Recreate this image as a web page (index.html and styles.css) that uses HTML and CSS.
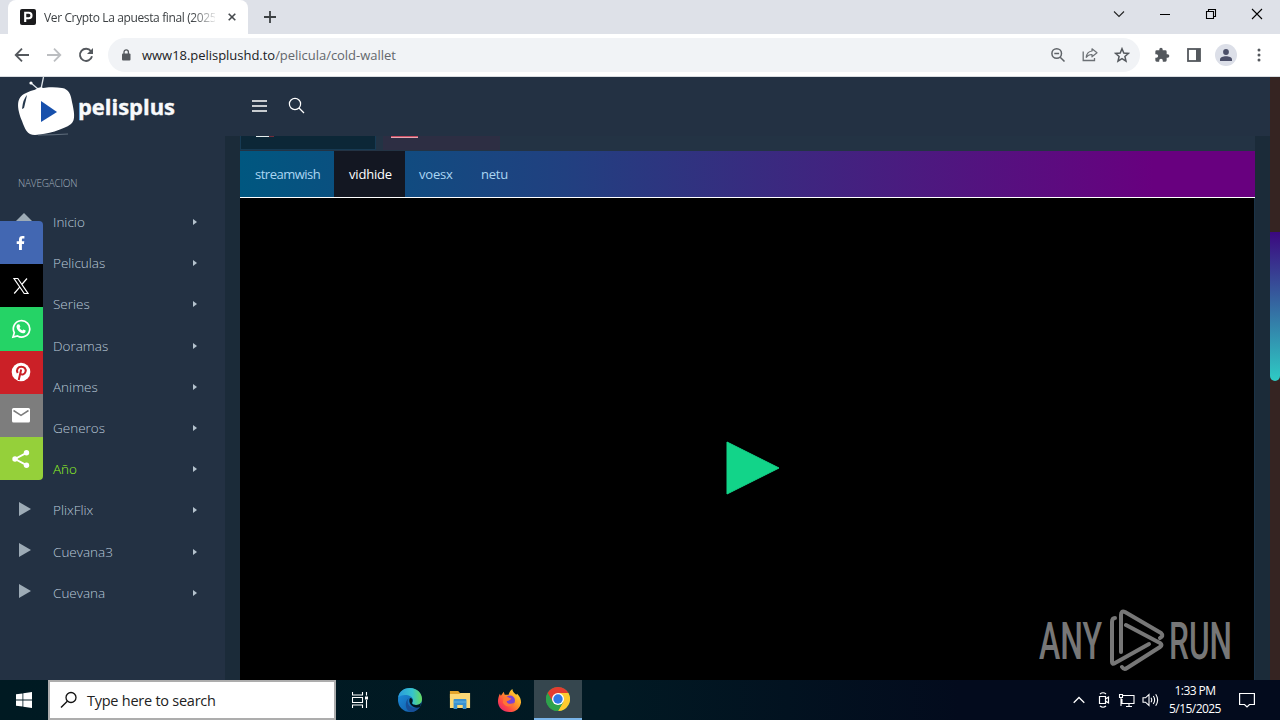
FILE: index.html
```html
<!DOCTYPE html>
<html lang="es">
<head>
  <meta charset="UTF-8">
  <meta name="viewport" content="width=device-width, initial-scale=1.0">
  <title>Ver Crypto La apuesta final (2025)</title>
  <link rel="stylesheet" href="styles.css">
</head>
<body>
  <div class="tabstrip">
    <div class="tab">
      <svg width="16" height="16" viewBox="0 0 16 16"><rect width="16" height="16" rx="2" fill="#1b1b1d"/><path d="M5.2 13V3.8h3.6a2.6 2.6 0 0 1 0 5.4H5.5" fill="none" stroke="#fff" stroke-width="2.1"/></svg>
      <span class="tab-title">Ver Crypto La apuesta final (2025</span>
      <svg class="tab-close" width="8" height="8" viewBox="0 0 8 8"><path d="M.7.7l6.6 6.6M7.3.7L.7 7.3" stroke="#45494d" stroke-width="1.6"/></svg>
    </div>
    <svg class="new-tab" width="12" height="12" viewBox="0 0 12 12"><path d="M6 0v12M0 6h12" stroke="#3c4043" stroke-width="1.8"/></svg>
    <div class="window-buttons">
      <svg width="12" height="12" viewBox="0 0 12 12"><path d="M1 3.5l5 5 5-5" fill="none" stroke="#222" stroke-width="1.1"/></svg>
      <svg width="12" height="12" viewBox="0 0 12 12"><path d="M1 6.5h10" stroke="#000"/></svg>
      <svg width="12" height="12" viewBox="0 0 12 12"><path d="M1.5 3.5h7v7h-7zM3.5 3.5v-2h7v7h-2" fill="none" stroke="#000" stroke-width="1.1"/></svg>
      <svg width="12" height="12" viewBox="0 0 12 12"><path d="M1 1l10 10M11 1L1 11" stroke="#000" stroke-width="1.1"/></svg>
    </div>
  </div>

  <div class="toolbar">
    <div class="nav-buttons">
      <svg width="16" height="16" viewBox="0 0 16 16"><path d="M15 8H2M8 1.7L1.7 8 8 14.3" fill="none" stroke="#54585d" stroke-width="1.8"/></svg>
      <svg width="16" height="16" viewBox="0 0 16 16"><path d="M1 8h13M8 1.7L14.3 8 8 14.3" fill="none" stroke="#bcbec1" stroke-width="1.8"/></svg>
      <svg width="16" height="16" viewBox="0 0 16 16"><path d="M13 4.2A6.1 6.1 0 1 0 14 9.3" fill="none" stroke="#54585d" stroke-width="1.9"/><path d="M15 1v6H9z" fill="#54585d"/></svg>
    </div>
    <div class="address">
      <svg width="10" height="12" viewBox="0 0 10 12"><rect x="1" y="4.5" width="8.5" height="7" rx="1" fill="#55595e"/><path d="M3 5V3a2.2 2.2 0 0 1 4.400 0v2" fill="none" stroke="#55595e" stroke-width="1.3"/></svg>
      <span class="url"><b>www18.pelisplushd.to</b>/pelicula/cold-wallet</span>
      <svg width="16" height="16" viewBox="0 0 16 16"><circle cx="6.7" cy="6.5" r="4.8" fill="none" stroke="#5f6368" stroke-width="1.5"/><path d="M10.2 10.2l4.3 4.3M4.3 6.5h4.8" stroke="#5f6368" stroke-width="1.5"/></svg>
      <svg width="16" height="16" viewBox="0 0 16 16"><path d="M1.2 4.5v9h11.3V11" fill="none" stroke="#6c7075" stroke-width="1.3"/><path d="M10 1.8l5 4-5 4V7.5C7.3 7.4 5.5 8.5 4.2 10.3 4.6 7 6.5 4.5 10 4z" fill="none" stroke="#6c7075" stroke-width="1.2" stroke-linejoin="round"/></svg>
      <svg width="16" height="16" viewBox="0 0 16 16"><path d="M8 1.7l1.8 4.3 4.7.4-3.6 3.1 1.1 4.6L8 11.700l-4 2.4 1.1-4.6L1.5 6.400 6.2 6z" fill="none" stroke="#54585d" stroke-width="1.5"/></svg>
    </div>
    <div class="tools">
      <svg width="16" height="16" viewBox="0 0 24 24"><path d="M20.5 11H19V7a2 2 0 0 0-2-2h-4V3.5a2.5 2.5 0 0 0-5 0V5H4a2 2 0 0 0-2 2v3.8h1.5a2.7 2.7 0 0 1 0 5.4H2V20a2 2 0 0 0 2 2h3.8v-1.5a2.7 2.7 0 0 1 5.4 0V22H17a2 2 0 0 0 2-2v-4h1.5a2.5 2.5 0 0 0 0-5z" fill="#54585d"/></svg>
      <svg width="14" height="14" viewBox="0 0 14 14"><rect x="1" y="1" width="12" height="12" fill="none" stroke="#54585d" stroke-width="1.8"/><rect x="9" y="1" width="4" height="12" fill="#54585d"/></svg>
      <span class="avatar"><svg width="14" height="14" viewBox="0 0 14 14"><circle cx="7" cy="4" r="2.9" fill="#4b4f68"/><path d="M1 13v-1.5C1 9.3 4 8.3 7 8.3s6 1 6 3.2V13z" fill="#4b4f68"/></svg></span>
      <svg width="4" height="14" viewBox="0 0 4 14"><g fill="#54585d"><circle cx="2" cy="2" r="1.5"/><circle cx="2" cy="7" r="1.5"/><circle cx="2" cy="12" r="1.5"/></g></svg>
    </div>
  </div>

  <div class="viewport">
    <div class="site">
      <header class="header">
        <svg class="logo" width="164" height="59" viewBox="0 0 164 59">
          <path d="M23 12L25.500 0M20 12L13 6" stroke="#dfe5ea" stroke-width="1.3"/><circle cx="13" cy="6" r="1.6" fill="#fff"/><path d="M17 13q5-5 10-1z" fill="#fff"/>
          <path d="M6 17C17 11 32 9 44 11C51 12 53 18 54 25C56 34 58 43 53 47C45 53 29 57 17 58C9 58 7 52 4 44C0 34-3 22 6 17z" fill="#fff"/>
          <path d="M4 32q1-10 5-14q-1 5-3 13z" fill="#25374c"/>
          <path d="M23 24v21l16-10z" fill="#1750ac"/>
          <path d="M20 58q15 0 30-1" stroke="#8a97a4" stroke-width=".6" fill="none"/>
          <text class="logo-text" x="60" y="38" textLength="97" lengthAdjust="spacingAndGlyphs">pelisplus</text>
        </svg>
        <svg class="menu-toggle" width="15" height="12" viewBox="0 0 15 12"><path d="M0 1h15M0 6h15M0 11h15" stroke="#fff" stroke-width="1.5"/></svg>
        <svg class="search-toggle" width="17" height="17" viewBox="0 0 17 17"><circle cx="7" cy="7" r="5.6" fill="none" stroke="#fff" stroke-width="1.2"/><path d="M11 11l5 5" stroke="#fff" stroke-width="1.3"/></svg>
      </header>
      <div class="content">
        <nav class="sidebar">
          <p class="nav-heading">NAVEGACION</p>
          <ul>
            <li class="home">Inicio</li>
            <li>Peliculas</li>
            <li>Series</li>
            <li>Doramas</li>
            <li>Animes</li>
            <li>Generos</li>
            <li class="active">Año</li>
            <li class="play">PlixFlix</li>
            <li class="play">Cuevana3</li>
            <li class="play">Cuevana</li>
          </ul>
        </nav>
        <main class="main">
          <div class="languages">
            <div class="language latino"><i></i></div>
            <div class="language subtitled"><i></i></div>
          </div>
          <div class="servers">
            <a class="first">streamwish</a>
            <a class="selected">vidhide</a>
            <a class="voesx">voesx</a>
            <a>netu</a>
          </div>
          <div class="player">
            <svg class="player-button" width="54" height="54" viewBox="0 0 54 54"><path d="M1 1v52l52-26z" fill="#12d489" stroke="#12d489" stroke-linejoin="round"/></svg>
            <svg class="watermark" width="196" height="64" viewBox="0 0 196 64">
              <g class="watermark-text">
                <text x="0" y="51" textLength="63" lengthAdjust="spacingAndGlyphs">ANY</text>
                <text x="130" y="51" textLength="63" lengthAdjust="spacingAndGlyphs">RUN</text>
              </g>
              <g fill="none" stroke="#777" stroke-width="4" stroke-linecap="round" stroke-linejoin="round">
                <path d="M76 10q-3 0-3 4v40q0 3 3 1l34-19"/>
                <path d="M82 44V7q0-5 4-3l36 21q3 3-1 5"/>
                <path d="M87 17l34 18q3 2 0 4L88 60q-3 2-5-1"/>
              </g>
            </svg>
          </div>
        </main>
      </div>
      <div class="share">
        <a class="facebook"><svg viewBox="0 0 20 20"><path d="M8 17v-6H5.7V8.300H8V6.500C8 4 9.3 2.900 11.4 2.900h2v2.500h-1.300c-1 0-1.2.5-1.2 1.3v1.600h2.400l-.4 2.700h-2v6z" fill="#fff"/></svg></a>
        <a class="x"><svg viewBox="0 0 20 20"><path d="M3 2.500h3.800L17 17.500h-3.800zM16 2.500L10.800 8.500M8.500 11.400l-5.300 6.100" fill="none" stroke="#fff" stroke-width="1.2"/></svg></a>
        <a class="whatsapp"><svg viewBox="0 0 20 20"><path d="M2 18l1.3-4.3A8.2 8.2 0 1 1 6.500 17z" fill="none" stroke="#fff" stroke-width="1.7"/><path d="M7 5.300l1.500.2.9 2.300-.9 1.200q1 1.900 2.900 2.600l1-1.200 2.300 1.100c0 2-1.300 2.800-2.700 2.800-3.300-.4-6.300-3.600-6.500-6.500 0-1.100.7-2.200 1.500-2.500z" fill="#fff"/></svg></a>
        <a class="pinterest"><svg viewBox="0 0 20 20"><circle cx="10" cy="10" r="9.3" fill="#fff"/><path d="M6.700 10.900C4.900 7.600 7 4.800 10.300 4.800s5 2.200 4.200 5c-.8 2.700-3.700 3.600-4.800 1.900M10.200 7.600L7.700 18" fill="none" stroke="#cb2027" stroke-width="2"/></svg></a>
        <a class="email"><svg viewBox="0 0 20 20"><rect x="1" y="3" width="18" height="14.5" rx="1.5" fill="#fff"/><path d="M2.500 5.500l7.500 4.800 7.500-4.800" fill="none" stroke="#7d7d7d" stroke-width="1.5"/></svg></a>
        <a class="sharethis"><svg viewBox="0 0 20 20"><path d="M15.500 3.800L4 10l11.500 6.200" fill="none" stroke="#fff" stroke-width="1.9"/><g fill="#fff"><circle cx="15.5" cy="3.8" r="2.7"/><circle cx="4" cy="10" r="2.7"/><circle cx="15.5" cy="16.2" r="2.7"/></g></svg></a>
      </div>
    </div>
    <div class="scrollbar"><div class="thumb"></div></div>
  </div>

  <div class="taskbar">
    <div class="start"><svg width="16" height="16" viewBox="0 0 16 16"><path d="M0 2.300l6.500-.9v6.200H0zM7.300 1.300L16 0v7.600H7.300zM0 8.400h6.500v6.200L0 13.700zM7.300 8.400H16V16l-8.700-1.300z" fill="#fff"/></svg></div>
    <div class="search-box">
      <svg width="18" height="18" viewBox="0 0 18 18"><circle cx="11" cy="6.5" r="5" fill="none" stroke="#111" stroke-width="1.3"/><path d="M7.300 10.200L1 16.500" stroke="#111" stroke-width="1.4"/></svg>
      <span>Type here to search</span>
    </div>
    <div class="apps">
      <div class="app"><svg width="16" height="16" viewBox="0 0 16 16"><path d="M.5 0v3h10V0M.5 16v-3h10v3M.5 5.500h10v5H.5zM14.500 0v3.500M14.500 8v8" fill="none" stroke="#fff" stroke-width="1.1"/><rect x="13" y="4.5" width="3" height="3" fill="#fff"/></svg></div>
      <div class="app"><svg width="26" height="26" viewBox="0 0 26 26">
        <defs>
          <linearGradient id="edgeTop" x1="0" x2="1"><stop offset="0" stop-color="#2999dc"/><stop offset=".6" stop-color="#36c3cd"/><stop offset="1" stop-color="#67db5c"/></linearGradient>
          <linearGradient id="edgeLow" x1="0" y1="0" x2="1" y2="1"><stop offset="0" stop-color="#1c91df"/><stop offset="1" stop-color="#10539e"/></linearGradient>
        </defs>
        <circle cx="13" cy="13" r="12" fill="url(#edgeLow)"/>
        <path d="M1 11C2 4 7 1 13 1c7 0 12 5 12 11 0 4-3 6-6 6-2 0-4-1-4-2 1-1 1-2 1-3 0-3-4-5-8-5-3 0-6 1-7 3z" fill="url(#edgeTop)"/>
        <path d="M12 11c-3 3-1 10 6 10 2 0 4-.5 5-1-2 3-6 5-9 5-6-1-7-11-2-14z" fill="#174f98"/>
        <path d="M13 11c3 0 3 3 2 5 0 1 2 2 4 2 2 0 4-1 5-2l-1 4c-6 3-13-4-10-9z" fill="#021820"/>
      </svg></div>
      <div class="app"><svg width="22" height="22" viewBox="0 0 24 22" preserveAspectRatio="none"><path d="M1 2h9l2 2h10v5H1z" fill="#e3a52c"/><path d="M1 5h10l2-1h10v15H1z" fill="#fcd976"/><path d="M5 20v-9q0-1 1-1h12q1 0 1 1v9h-4v-4H9v4z" fill="#3a92d0"/><path d="M5 13h14" stroke="#65b5e3"/></svg></div>
      <div class="app"><svg width="25" height="25" viewBox="0 0 26 26">
        <defs><linearGradient id="fox" x1="1" y1="0" x2="0" y2="1"><stop offset="0" stop-color="#fff13a"/><stop offset=".4" stop-color="#ff9d27"/><stop offset=".7" stop-color="#ff4844"/><stop offset="1" stop-color="#d71785"/></linearGradient></defs>
        <path d="M3 6l1 2 3-4 1 3 4 0c1-3 2-5 4-6 0 3 2 4 4 6l1-1c3 3 4 6 4 9-1 6-5 10-12 10S1 20 1 14c0-3 1-6 2-8z" fill="url(#fox)"/>
        <circle cx="13.5" cy="13" r="5.2" fill="#7b42d4"/><path d="M7 10c3-2 5 0 8 1-1 2-4 2-5 3 1 3 5 3 8 1-2 5-9 6-12 0z" fill="#ff7535"/>
      </svg></div>
      <div class="app current"><svg width="24" height="24" viewBox="0 0 24 24">
        <circle cx="12" cy="12" r="12" fill="#2ea24b"/><path d="M1.600 6A12 12 0 0 1 22.400 6H12L6.800 15z" fill="#e33c30"/><path d="M22.400 6A12 12 0 0 1 12 24l5.200-9L18 6z" fill="#fdcb2f"/><path d="M12 6h10.400l-5.200 9z" fill="#fdcb2f"/><path d="M1.600 6A12 12 0 0 0 12 24l5.200-9H6.800z" fill="#2ea24b"/>
        <circle cx="12" cy="12" r="6" fill="#fff"/><circle cx="12" cy="12" r="4.7" fill="#2f78e5"/>
      </svg></div>
    </div>
    <div class="tray">
      <svg width="12" height="8" viewBox="0 0 12 8"><path d="M.7 6.800L6 1.500l5.300 5.300" fill="none" stroke="#fff" stroke-width="1.3"/></svg>
      <svg class="tray-camera" width="12" height="18" viewBox="0 0 12 18"><path d="M1.500 5.500h6v7h-6zM7.500 8l3-2v6l-3-2M2 3q3-2.500 6 0M2 15q3 2.500 6 0" fill="none" stroke="#fff" stroke-width="1.2"/></svg>
      <svg class="tray-network" width="17" height="14" viewBox="0 0 17 14"><path d="M5 2.500h11v8H4V6M8 13.500h6M11 10.500v3M1.500 1.500h3v3h-3zM3 4.500V13" fill="none" stroke="#fff" stroke-width="1.1"/></svg>
      <svg class="tray-sound" width="17" height="14" viewBox="0 0 17 14"><path d="M1 4.800h2.500L7 1.500v11L3.500 9.200H1zM9 4.700q1.500 2.300 0 4.600M11.300 3q2.700 4 0 8M13.700 1.300q3.900 5.700 0 11.400" fill="none" stroke="#fff" stroke-width="1.1"/></svg>
      <div class="clock"><div>1:33 PM</div><div>5/15/2025</div></div>
      <svg class="notifications" width="16" height="17" viewBox="0 0 16 17"><path d="M.6 1.500h14.800v11H10.500L8 15l-2.500-2.500H.6z" fill="none" stroke="#fff" stroke-width="1.2"/></svg>
    </div>
  </div>
</body>
</html>
```
FILE: styles.css
```css
* {
  box-sizing: border-box;
}
body {
  margin: 0;
  height: 720px;
  display: flex;
  flex-direction: column;
  overflow: hidden;
  font-family: "Open Sans", "Noto Sans", sans-serif;
}
svg {
  display: block;
  flex-shrink: 0;
}

/* Browser */
.tabstrip {
  height: 34px;
  background-color: #dee1e8;
  display: flex;
  align-items: center;
  padding-left: 8px;
}
.tab {
  width: 240px;
  height: 34px;
  padding: 0 12px;
  display: flex;
  align-items: center;
  background-color: white;
  border-radius: 8px 8px 0 0;
}
.tab-title {
  width: 171px;
  margin: 0 13px 0 8px;
  overflow: hidden;
  white-space: nowrap;
  font-size: 12px;
  letter-spacing: -0.37px;
  color: #3c4043;
  -webkit-mask-image: linear-gradient(to right, #000 148px, transparent 174px);
  mask-image: linear-gradient(to right, #000 148px, transparent 174px);
}
.new-tab {
  margin-left: 16px;
}
.window-buttons {
  display: flex;
  gap: 34px;
  margin: -6px 17px 0 auto;
}
.toolbar {
  height: 43px;
  display: flex;
  align-items: center;
  background-color: white;
  border-bottom: 1px solid #d9dde1;
}
.nav-buttons {
  width: 108px;
  padding-left: 14px;
  display: flex;
  gap: 16px;
}
.address {
  width: 1032px;
  height: 34px;
  padding: 0 10px 0 13px;
  display: flex;
  align-items: center;
  gap: 16px;
  border-radius: 17px;
  background-color: #f1f3f6;
}
.url {
  flex: 1;
  margin-left: -5px;
  font-size: 13px;
  letter-spacing: -0.03px;
  color: #63676c;
  white-space: nowrap;
}
.url b {
  font-weight: normal;
  color: #202124;
}
.tools {
  display: flex;
  align-items: center;
  margin-left: 14px;
}
.tools > svg:nth-child(2) {
  margin: 0 14px 0 17px;
}
.avatar {
  width: 22px;
  height: 22px;
  margin-right: 20px;
  display: flex;
  align-items: center;
  justify-content: center;
  border-radius: 50%;
  background-color: #dcdfe8;
}

/* Page */
.viewport {
  height: 603px;
  display: flex;
}
.site {
  width: 1270px;
  position: relative;
  background-color: #1b2b39;
}
.header {
  height: 59px;
  padding-left: 18px;
  display: flex;
  align-items: center;
  background-color: #233143;
}
.logo {
  overflow: visible;
}
.logo-text {
  font-family: "Open Sans", sans-serif;
  font-size: 22px;
  font-weight: bold;
  fill: #f8f9fb;
  stroke: #f8f9fb;
  stroke-width: 0.4px;
}
.menu-toggle {
  margin: -2px 22px 0 70px;
}
.search-toggle {
  margin: -2px 0 0 -1px;
}
.content {
  height: 544px;
  display: flex;
}
.sidebar {
  width: 225px;
  background-color: #233143;
}
.nav-heading {
  height: 65.5px;
  margin: 0;
  padding: 40px 18px 0;
  font-size: 10px;
  font-weight: 300;
  line-height: 14px;
  letter-spacing: -0.2px;
  color: #a3b1bf;
}
.sidebar ul {
  margin: 0;
  padding: 0;
  list-style: none;
}
.sidebar li {
  position: relative;
  height: 41.2px;
  padding: 0 28px 0 53px;
  display: flex;
  align-items: center;
  justify-content: space-between;
  font-size: 13.5px;
  font-weight: 300;
  color: #b9c8d8;
}
.sidebar li::after {
  content: "";
  border: 3px solid transparent;
  border-left: 4px solid #b4c2cd;
  border-right: 0;
}
.sidebar .active {
  color: #92f525;
}
.sidebar .play::before,
.sidebar .home::before {
  content: "";
  position: absolute;
  left: 19px;
  top: 12px;
  border: 7px solid transparent;
  border-left: 12px solid #9dabb6;
  border-right: 0;
}
.sidebar .home::before {
  left: 16px;
  top: 11px;
  border: 8px solid transparent;
  border-top: 0;
  border-bottom-color: #9dabb6;
}
.main {
  width: 1015px;
  margin-left: 15px;
}
.languages {
  height: 15px;
  display: flex;
  background-color: #233344;
}
.language {
  height: 14px;
}
.language i {
  display: block;
  height: 2px;
}
.latino {
  width: 136px;
  margin-right: 7px;
  padding-left: 15px;
  background-color: #0c2737;
  border: 1px solid #173a53;
  border-top: 0;
}
.latino i {
  width: 18px;
  height: 1px;
  background: linear-gradient(to right, #e4eeee 75%, #712c3a 75%);
}
.subtitled {
  width: 117px;
  padding-left: 8px;
  background-color: #2d2e43;
}
.subtitled i {
  width: 27px;
  background-color: #c84c61;
  border-bottom: 1px solid #e4a6b2;
}
.servers {
  height: 47px;
  display: flex;
  border-bottom: 1px solid white;
  background: linear-gradient(to right, #005780, #214080 32%, #68007f 90%);
}
.servers a {
  padding: 13px 0 0 15px;
  font-size: 13px;
  line-height: 20px;
  letter-spacing: -0.2px;
  color: #abd6f3;
}
.servers .first {
  width: 94px;
  letter-spacing: -0.5px;
}
.servers .selected {
  width: 71px;
  background-color: #131722;
  color: white;
}
.servers .voesx {
  width: 61px;
  padding-left: 14px;
}
.player {
  position: relative;
  height: 482px;
  background-color: black;
  border-right: 1px solid #1b3347;
}
.player-button {
  position: absolute;
  left: 486px;
  top: 243px;
}
.watermark {
  position: absolute;
  left: 799px;
  top: 410px;
}
.watermark-text {
  font-family: Roboto, sans-serif;
  font-size: 52px;
  font-weight: 500;
  fill: #777;
}
.share {
  position: absolute;
  left: 0;
  top: 144px;
  width: 43px;
  border-radius: 0 4px 4px 0;
  overflow: hidden;
}
.share a {
  height: 43.2px;
  padding-right: 1px;
  display: flex;
  align-items: center;
  justify-content: center;
}
.share svg {
  width: 20px;
  height: 20px;
}
.facebook {
  background-color: #4267b2;
}
.x {
  background-color: black;
}
.whatsapp {
  background-color: #25d366;
}
.pinterest {
  background-color: #cb2027;
}
.email {
  background-color: #7d7d7d;
}
.sharethis {
  background-color: #95d03a;
}
.scrollbar {
  width: 10px;
  padding-top: 155px;
  background-color: #352422;
}
.thumb {
  height: 149px;
  border-radius: 0 0 5px 5px;
  background: linear-gradient(#3b087f, #2ecbc4);
}

/* Taskbar */
.taskbar {
  height: 40px;
  display: flex;
  background: linear-gradient(to right, #001a22, #011923 48%, #030b1d 75%);
}
.start {
  width: 48px;
  padding: 12px 16px;
}
.search-box {
  width: 288px;
  padding: 0 10px;
  display: flex;
  align-items: center;
  gap: 9px;
  background-color: white;
  border: 2px solid #adadad;
  font-size: 14.5px;
  letter-spacing: -0.25px;
  color: #222;
}
.apps {
  display: flex;
}
.app {
  width: 49px;
  display: flex;
  align-items: center;
  justify-content: center;
}
.app:first-child {
  width: 48px;
}
.app:nth-child(2) {
  width: 51px;
}
.app:nth-child(4) {
  width: 50px;
}
.current {
  width: 48px;
  background-color: #35464e;
  border-bottom: 2px solid #79b4e8;
}
.tray {
  display: flex;
  align-items: center;
  width: 207px;
  margin-left: auto;
  color: white;
}
.tray > svg {
  margin-right: 13px;
}
.tray > .tray-camera {
  margin-right: 8px;
}
.tray > .tray-network {
  margin-right: 7px;
}
.tray > .tray-sound {
  margin-right: 9px;
}
.clock {
  width: 54px;
  margin-right: 17px;
  font-size: 12px;
  line-height: 18px;
  letter-spacing: -0.55px;
  text-align: center;
  white-space: nowrap;
}
```
